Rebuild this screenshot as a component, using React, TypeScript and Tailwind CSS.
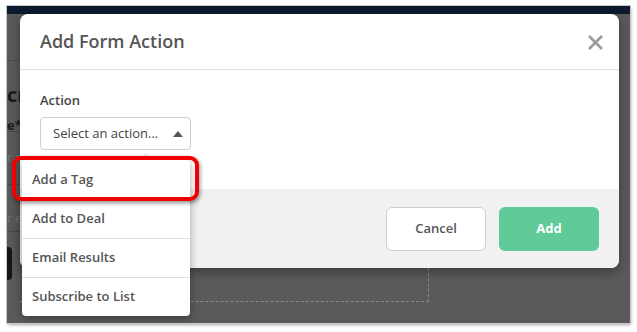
import React, { FC } from 'react'

const actions = ['Add a Tag', 'Add to Deal', 'Email Results', 'Subscribe to List']

// dimmed page that sits behind the modal, only a thin strip shows on the left
const PageBehind: FC = () => (
  <div className="flex h-full flex-col">
    <div className="h-[8px] bg-[#0c1a2b]" />
    <div className="flex flex-1 bg-[#5a5a5a]">
      <div className="flex w-[13px] flex-col overflow-hidden">
        <div className="h-[47px] border-b border-dashed border-[#444]" />
        <div className="h-[45px] whitespace-nowrap pt-[24px] text-[20px] font-bold leading-none text-[#1a1a1a]">
          cr
        </div>
        <div className="h-[25px] whitespace-nowrap pt-[13px] text-[13px] font-bold leading-none text-[#1a1a1a]">
          e*
        </div>
        <div className="h-[54px] whitespace-nowrap border-y border-[#4a4a4a] pt-[20px] text-[12px] leading-none text-[#777]">
          r r
        </div>
        <div className="h-[47px] whitespace-nowrap border-b border-[#4a4a4a] pt-[28px] text-[12px] leading-none text-[#777]">
          r e
        </div>
        <div className="mt-[15px] h-[33px] w-[5px] rounded-r-[4px] bg-[#161616]" />
      </div>
      <div className="flex flex-1 flex-col">
        <div className="h-[254px]" />
        <div className="flex">
          <div className="h-[34px] w-[409px] border-r border-b border-dashed border-[#8a8a8a]" />
        </div>
      </div>
    </div>
  </div>
)

const App: FC = () => {
  return (
    <div
      className="h-[332px] w-[637px] bg-white pl-[7px] pt-[6px]"
      style={{ fontFamily: '"Open Sans", "Liberation Sans", sans-serif' }}
    >
      <div className="relative h-[317px] w-[623px] overflow-hidden shadow-[0_0_0_1px_#c9c9c9,1px_2px_3px_rgba(0,0,0,0.35)]">
        <PageBehind />

        {/* Modal */}
        <div className="absolute left-[13px] top-[8px] flex h-[254px] w-[599px] flex-col overflow-hidden rounded-[8px] bg-white shadow-[0_4px_12px_rgba(0,0,0,0.35)]">
          <div className="flex h-[56px] items-center justify-between border-b border-[#e2e2e2] pl-[20px] pr-[15px]">
            <span className="text-[18px] font-semibold text-[#555]">Add Form Action</span>
            <svg width="17" height="17" viewBox="0 0 17 17" className="mt-[2px]">
              <path d="M2 2 L15 15 M15 2 L2 15" stroke="#9a9a9a" strokeWidth="2.6" strokeLinecap="butt" />
            </svg>
          </div>
          <div className="flex h-[119px] flex-col pl-[20px] pt-[21px]">
            <span className="text-[13px] font-semibold leading-[18px] text-[#444]">Action</span>
            <div className="mt-[8px] flex h-[33px] w-[151px] items-center justify-between rounded-[4px] border border-[#cfcfcf] pl-[12px] pr-[7px]">
              <span className="text-[13px] text-[#444]">Select an action...</span>
              <svg width="10" height="6" viewBox="0 0 10 6">
                <path d="M0 6 L5 0 L10 6 Z" fill="#555" />
              </svg>
            </div>
          </div>
          <div className="flex flex-1 items-center justify-end gap-[13px] bg-[#f1f1f1] pr-[20px]">
            <button className="h-[44px] w-[100px] rounded-[6px] border border-[#cfcfcf] bg-white text-[13px] font-semibold text-[#555]">
              Cancel
            </button>
            <button className="h-[44px] w-[100px] rounded-[6px] bg-[#60cb98] text-[13px] font-bold text-white">
              Add
            </button>
          </div>
        </div>

        {/* Dropdown pointer */}
        <svg width="12" height="7" viewBox="0 0 12 7" className="absolute left-[133px] top-[147px]">
          <path d="M0 7 L6 1 L12 7" fill="white" stroke="#e3e3e3" strokeWidth="1" />
        </svg>

        {/* Dropdown menu */}
        <div className="absolute left-[15px] top-[154px] flex w-[168px] flex-col rounded-[4px] bg-white shadow-[0_2px_8px_rgba(0,0,0,0.35)]">
          {actions.map((item, i) => (
            <div
              key={item}
              className={
                i === 0
                  ? 'flex h-[39px] items-center px-[10px] text-[13px] font-semibold text-[#555]'
                  : 'flex h-[39px] items-center border-t border-[#dedede] px-[10px] text-[13px] font-semibold text-[#555]'
              }
            >
              {item}
            </div>
          ))}
        </div>

        {/* Highlight around first option */}
        <div className="absolute left-[5px] top-[150px] h-[45px] w-[187px] rounded-[9px] border-[4px] border-[#f00000] shadow-[1px_2px_4px_rgba(0,0,0,0.45)]" />
      </div>
    </div>
  )
}

export default App
